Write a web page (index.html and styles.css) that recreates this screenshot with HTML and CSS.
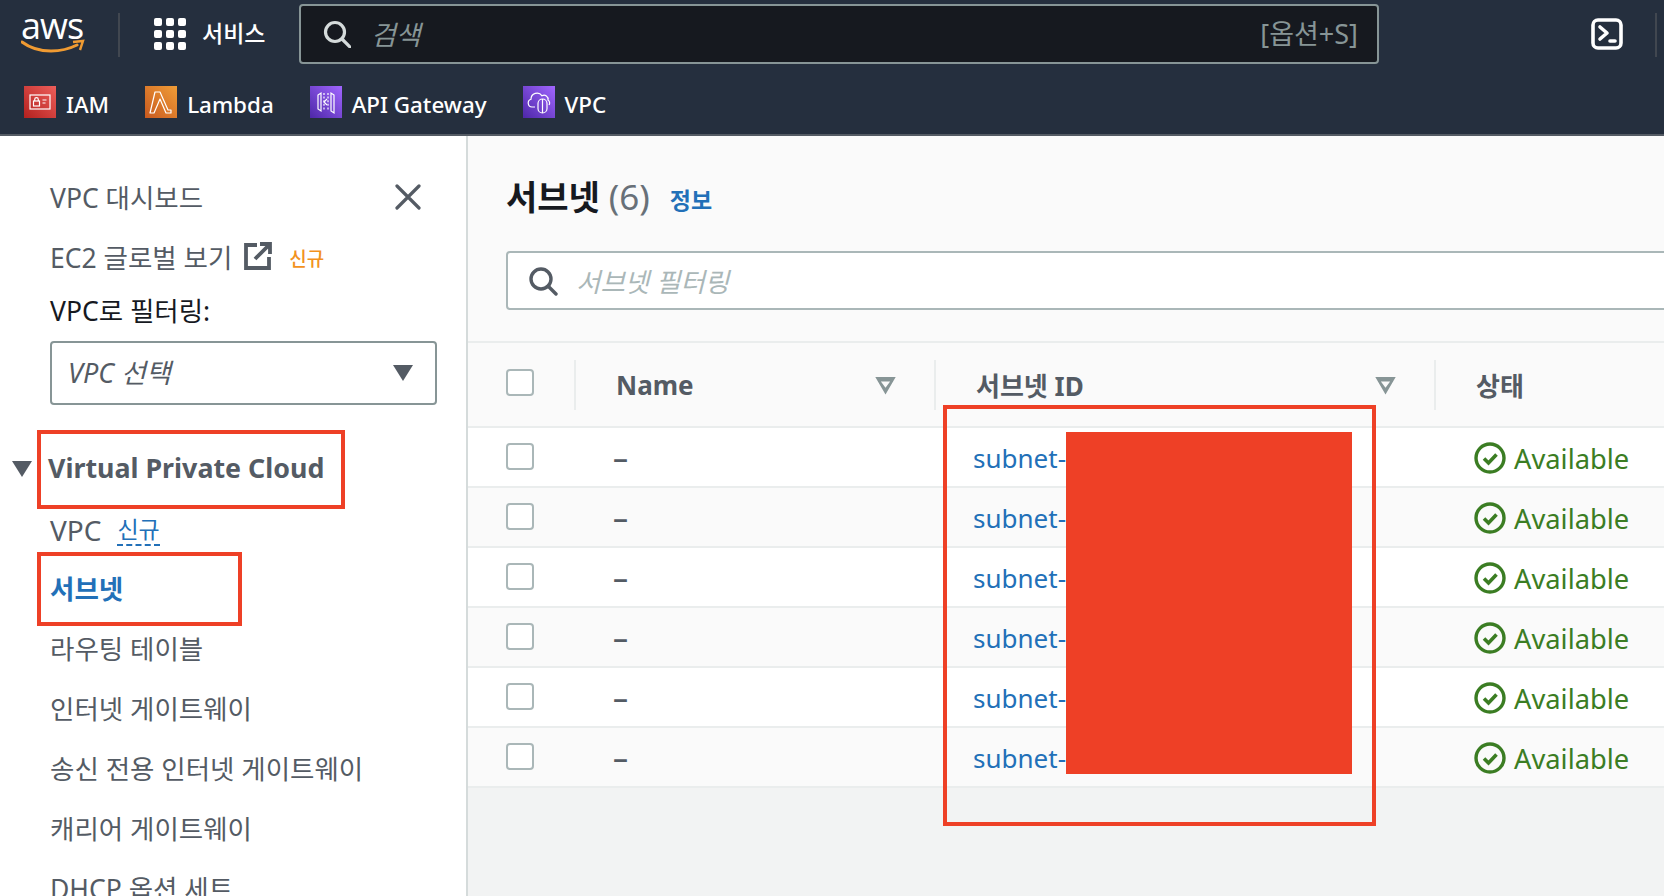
FILE: index.html
```html
<!DOCTYPE html>
<html lang="ko">
<head>
    <meta charset="UTF-8">
    <title>서브넷 | VPC Console</title>
    <link rel="stylesheet" href="styles.css">
</head>
<body>
    <header class="topbar">
        <div class="topbar-main">
            <div class="aws-logo">
                <span class="aws-word">aws</span>
                <svg class="aws-smile" viewBox="0 0 64 16" width="64" height="16"><path d="M1 3c8 6 18 9 29 9 9 0 18-2 26-6" fill="none" stroke="#f09b32" stroke-width="3" stroke-linecap="round"/><path d="M52 3l10-1-3 9" fill="none" stroke="#f09b32" stroke-width="2.4"/></svg>
            </div>
            <div class="services">
                <svg class="grid-icon" viewBox="0 0 34 32" width="34" height="32" fill="#fff">
                    <rect x="0" y="0" width="8" height="8" rx="2"/><rect x="12" y="0" width="8" height="8" rx="2"/><rect x="24" y="0" width="8" height="8" rx="2"/>
                    <rect x="0" y="12" width="8" height="8" rx="2"/><rect x="12" y="12" width="8" height="8" rx="2"/><rect x="24" y="12" width="8" height="8" rx="2"/>
                    <rect x="0" y="24" width="8" height="8" rx="2"/><rect x="12" y="24" width="8" height="8" rx="2"/><rect x="24" y="24" width="8" height="8" rx="2"/>
                </svg>
                <span class="services-text">서비스</span>
            </div>
            <div class="top-search">
                <svg viewBox="0 0 28 28" width="28" height="28" fill="none" stroke="#d5dbdb" stroke-width="3.2"><circle cx="12" cy="12" r="9.5"/><path d="M19 19l8 8" stroke-linecap="round"/></svg>
                <span class="top-search-text">검색</span>
                <span class="top-search-key">[옵션+S]</span>
            </div>
            <svg class="shell-icon" viewBox="0 0 32 32" width="32" height="32" fill="none" stroke="#fff" stroke-width="3.6"><rect x="2" y="2" width="28" height="28" rx="5"/><path d="M9 9l7 6-7 6" stroke-linecap="round" stroke-linejoin="round"/><path d="M19 23h5" stroke-linecap="round"/></svg>
            <div class="shell-divider"></div>
        </div>
        <div class="favorites">
            <div class="fav">
                <svg class="fav-icon" viewBox="0 0 32 32" width="32" height="32"><defs><linearGradient id="g-iam" x1="0" y1="1" x2="1" y2="0"><stop offset="0" stop-color="#b3211f"/><stop offset="1" stop-color="#ed5e5a"/></linearGradient></defs><rect width="32" height="32" fill="url(#g-iam)"/><g fill="none" stroke="#fff" stroke-width="1.2"><rect x="6" y="9" width="20" height="14"/><rect x="9.5" y="15" width="6" height="5"/><path d="M10.7 15v-1.6a1.8 1.8 0 0 1 3.6 0V15M18.5 14h4M18.5 17h3"/></g></svg>
                <span>IAM</span>
            </div>
            <div class="fav">
                <svg class="fav-icon" viewBox="0 0 32 32" width="32" height="32"><defs><linearGradient id="g-lam" x1="0" y1="1" x2="1" y2="0"><stop offset="0" stop-color="#c8591f"/><stop offset="1" stop-color="#f09d37"/></linearGradient></defs><rect width="32" height="32" fill="url(#g-lam)"/><path d="M10 6h5l8 18h3v3h-5l-6-14-6 14H5z" fill="none" stroke="#fff" stroke-width="1.2" stroke-linejoin="round"/></svg>
                <span>Lambda</span>
            </div>
            <div class="fav">
                <svg class="fav-icon" viewBox="0 0 32 32" width="32" height="32"><defs><linearGradient id="g-api" x1="0" y1="1" x2="1" y2="0"><stop offset="0" stop-color="#4d27a8"/><stop offset="1" stop-color="#a166ff"/></linearGradient></defs><rect width="32" height="32" fill="url(#g-api)"/><g fill="none" stroke="#fff" stroke-width="1.2"><path d="M8 9l3-2v18l-3-2zM24 9l-3-2v18l3 2z"/><path d="M14 7v18M18 7v18" stroke-dasharray="2 1.6"/><path d="M17 13l-3 3 3 3"/></g></svg>
                <span>API Gateway</span>
            </div>
            <div class="fav">
                <svg class="fav-icon" viewBox="0 0 32 32" width="32" height="32"><defs><linearGradient id="g-vpc" x1="0" y1="1" x2="1" y2="0"><stop offset="0" stop-color="#4d27a8"/><stop offset="1" stop-color="#a166ff"/></linearGradient></defs><rect width="32" height="32" fill="url(#g-vpc)"/><g fill="none" stroke="#fff" stroke-width="1.2"><path d="M12 21H9a4 4 0 0 1-1-7.8 6 6 0 0 1 11-3.4 4 4 0 0 1 6 4.2 3.5 3.5 0 0 1 1 5"/><rect x="15" y="13" width="9" height="14" rx="4.5"/><path d="M19.5 13v14"/></g></svg>
                <span>VPC</span>
            </div>
        </div>
    </header>

    <div class="layout">
        <nav class="sidebar">
            <div class="side-top">
                <span class="side-link">VPC 대시보드</span>
                <svg class="close-icon" viewBox="0 0 26 26" width="26" height="26" stroke="#545b64" stroke-width="3.2" stroke-linecap="round"><path d="M2 2l22 22M24 2L2 24"/></svg>
            </div>
            <div class="side-row ec2-row">
                <span class="side-link">EC2 글로벌 보기</span>
                <svg viewBox="0 0 28 28" width="28" height="28" fill="none" stroke="#545b64" stroke-width="3.8"><path d="M13 3H2v23h23V15"/><path d="M11 17L25 3M16 2h10v10"/></svg>
                <span class="badge-new">신규</span>
            </div>
            <div class="filter-label">VPC로 필터링:</div>
            <div class="vpc-select">
                <span class="vpc-select-text">VPC 선택</span>
                <span class="tri"></span>
            </div>
            <div class="side-section">
                <span class="tri tri-section"></span>
                <span>Virtual Private Cloud</span>
            </div>
            <ul class="side-list">
                <li class="side-vpc"><span class="side-vpc-name">VPC</span><span class="new-link">신규</span></li>
                <li class="active">서브넷</li>
                <li>라우팅 테이블</li>
                <li>인터넷 게이트웨이</li>
                <li>송신 전용 인터넷 게이트웨이</li>
                <li>캐리어 게이트웨이</li>
                <li>DHCP 옵션 세트</li>
            </ul>
        </nav>

        <main class="content">
            <section class="panel">
                <div class="panel-head">
                    <h1>서브넷 <span class="count">(6)</span></h1>
                    <a class="info">정보</a>
                </div>
                <div class="filter-box">
                    <svg viewBox="0 0 30 30" width="30" height="30" fill="none" stroke="#545b64" stroke-width="3.4"><circle cx="13" cy="13" r="10"/><path d="M20 20l8 8" stroke-linecap="round"/></svg>
                    <span>서브넷 필터링</span>
                </div>
                <div class="table">
                    <div class="row head">
                        <div class="cell"><span class="check"></span></div>
                        <div class="cell th">Name<span class="sort"></span></div>
                        <div class="cell th">서브넷 ID<span class="sort"></span></div>
                        <div class="cell th">상태</div>
                    </div>
                    <div class="row">
                        <div class="cell"><span class="check"></span></div>
                        <div class="cell dash">–</div>
                        <div class="cell"><a class="subnet">subnet-</a></div>
                        <div class="cell status"><svg viewBox="0 0 32 32" width="32" height="32" fill="none" stroke="#3b7d23"><circle cx="16" cy="16" r="14" stroke-width="3.4"/><path d="M10 16.5l4.5 4.5 8-8.5" stroke-width="3.6"/></svg>Available</div>
                    </div>
                    <div class="row">
                        <div class="cell"><span class="check"></span></div>
                        <div class="cell dash">–</div>
                        <div class="cell"><a class="subnet">subnet-</a></div>
                        <div class="cell status"><svg viewBox="0 0 32 32" width="32" height="32" fill="none" stroke="#3b7d23"><circle cx="16" cy="16" r="14" stroke-width="3.4"/><path d="M10 16.5l4.5 4.5 8-8.5" stroke-width="3.6"/></svg>Available</div>
                    </div>
                    <div class="row">
                        <div class="cell"><span class="check"></span></div>
                        <div class="cell dash">–</div>
                        <div class="cell"><a class="subnet">subnet-</a></div>
                        <div class="cell status"><svg viewBox="0 0 32 32" width="32" height="32" fill="none" stroke="#3b7d23"><circle cx="16" cy="16" r="14" stroke-width="3.4"/><path d="M10 16.5l4.5 4.5 8-8.5" stroke-width="3.6"/></svg>Available</div>
                    </div>
                    <div class="row">
                        <div class="cell"><span class="check"></span></div>
                        <div class="cell dash">–</div>
                        <div class="cell"><a class="subnet">subnet-</a></div>
                        <div class="cell status"><svg viewBox="0 0 32 32" width="32" height="32" fill="none" stroke="#3b7d23"><circle cx="16" cy="16" r="14" stroke-width="3.4"/><path d="M10 16.5l4.5 4.5 8-8.5" stroke-width="3.6"/></svg>Available</div>
                    </div>
                    <div class="row">
                        <div class="cell"><span class="check"></span></div>
                        <div class="cell dash">–</div>
                        <div class="cell"><a class="subnet">subnet-</a></div>
                        <div class="cell status"><svg viewBox="0 0 32 32" width="32" height="32" fill="none" stroke="#3b7d23"><circle cx="16" cy="16" r="14" stroke-width="3.4"/><path d="M10 16.5l4.5 4.5 8-8.5" stroke-width="3.6"/></svg>Available</div>
                    </div>
                    <div class="row">
                        <div class="cell"><span class="check"></span></div>
                        <div class="cell dash">–</div>
                        <div class="cell"><a class="subnet">subnet-</a></div>
                        <div class="cell status"><svg viewBox="0 0 32 32" width="32" height="32" fill="none" stroke="#3b7d23"><circle cx="16" cy="16" r="14" stroke-width="3.4"/><path d="M10 16.5l4.5 4.5 8-8.5" stroke-width="3.6"/></svg>Available</div>
                    </div>
                </div>
            </section>
        </main>
    </div>

    <!-- annotations drawn over the screenshot -->
    <div class="mark mark-section"></div>
    <div class="mark mark-subnet"></div>
    <div class="mark mark-ids"></div>
    <div class="redact"></div>
</body>
</html>
```

FILE: styles.css
```css
* {
    box-sizing: border-box;
}
html, body {
    height: 100%;
}
body {
    margin: 0;
    height: 896px;
    overflow: hidden;
    position: relative;
    display: flex;
    flex-direction: column;
    font-family: "Noto Sans", "Noto Sans CJK KR", sans-serif;
    font-size: 26.5px;
    color: #545b64;
    background-color: #f2f3f3;
}

/* top bar */
.topbar {
    height: 136px;
    flex: none;
    background-color: #252f3e;
    border-bottom: 2px solid #545b64;
    color: #fff;
}
.topbar-main {
    height: 68px;
    display: flex;
    align-items: flex-start;
    padding-top: 4px;
}
.aws-logo {
    width: 120px;
    height: 44px;
    margin-top: 9px;
    padding-left: 21px;
    border-right: 2px solid #414750;
}
.aws-word {
    display: block;
    font-family: "Open Sans", sans-serif;
    font-size: 36px;
    line-height: 25px;
    letter-spacing: -1px;
}
.aws-smile {
    display: block;
    margin-top: 1px;
}
.services {
    width: 179px;
    height: 60px;
    display: flex;
    align-items: center;
    gap: 14px;
    padding-left: 34px;
    font-size: 23px;
    font-weight: 500;
}
.services-text {
    margin-top: -4px;
}
.top-search {
    width: 1080px;
    height: 60px;
    display: flex;
    align-items: center;
    padding: 0 19px 0 22px;
    background-color: #16191f;
    border: 2px solid #879596;
    border-radius: 4px;
    font-size: 27px;
    color: #879596;
}
.top-search-text {
    margin-top: -2px;
    margin-left: 20px;
    font-style: italic;
}
.top-search-key {
    margin-top: -3px;
    margin-left: auto;
}
.shell-icon {
    margin: 14px 0 0 212px;
}
.shell-divider {
    width: 2px;
    height: 44px;
    margin: 9px 0 0 32px;
    background-color: #414750;
}
.favorites {
    height: 66px;
    display: flex;
    align-items: center;
    padding-left: 24px;
    padding-top: 4px;
}
.fav {
    display: flex;
    align-items: center;
    gap: 10px;
    margin-right: 36px;
    font-size: 22.4px;
    font-weight: 500;
}
.fav span {
    margin-top: 2px;
}
.fav-icon {
    margin-top: -2px;
}

/* body */
.layout {
    flex: 1;
    display: flex;
    min-height: 0;
}
.sidebar {
    width: 468px;
    flex: none;
    background-color: #fff;
    border-right: 2px solid #d5dbdb;
    padding: 43px 0 0 50px;
    overflow: hidden;
}
.side-top {
    display: flex;
    align-items: center;
    justify-content: space-between;
    height: 34px;
    padding-right: 45px;
}
.close-icon {
    margin-top: 2px;
}
.side-row {
    display: flex;
    align-items: center;
}
.ec2-row {
    height: 34px;
    margin-top: 26px;
    gap: 12px;
}
.badge-new {
    margin-left: 5px;
    margin-top: 4px;
    font-size: 19px;
    font-weight: 500;
    color: #f2921d;
}
.filter-label {
    margin-top: 21px;
    height: 34px;
    line-height: 34px;
    color: #16191f;
}
.vpc-select {
    width: 387px;
    height: 64px;
    margin-top: 13px;
    display: flex;
    align-items: center;
    justify-content: space-between;
    padding: 0 22px 0 16px;
    border: 2px solid #879596;
    border-radius: 4px;
    font-size: 27px;
    font-style: italic;
}
.vpc-select-text {
    margin-top: -4px;
}
.tri {
    width: 0;
    height: 0;
    border-left: 10px solid transparent;
    border-right: 10px solid transparent;
    border-top: 16px solid #545b64;
}
.side-section {
    position: relative;
    height: 34px;
    margin-top: 45px;
    display: flex;
    align-items: center;
    font-size: 26.8px;
    font-weight: 700;
    margin-left: -2px;
}
.tri-section {
    position: absolute;
    left: -36px;
    top: 11px;
}
.side-list {
    list-style: none;
    margin: 13px 0 0;
    padding: 0;
}
.side-list li {
    height: 60px;
    display: flex;
    align-items: center;
    gap: 16px;
    white-space: nowrap;
}
.side-list .side-vpc {
    padding-top: 5px;
}
.side-vpc-name {
    font-size: 28px;
}
.side-list .active {
    color: #2270b8;
    font-weight: 700;
}
.new-link {
    font-size: 23px;
    color: #2270b8;
    border-bottom: 2px dashed #2270b8;
    line-height: 30px;
}

/* main panel */
.content {
    flex: 1;
    min-width: 0;
    overflow: hidden;
}
.panel {
    background-color: #fafafa;
}
.panel-head {
    height: 115px;
    display: flex;
    align-items: center;
    padding: 3px 0 0 38px;
    gap: 20px;
}
.panel-head h1 {
    margin: 0;
    font-size: 34px;
    font-weight: 700;
    color: #16191f;
}
.count {
    font-size: 35px;
    font-weight: 400;
    color: #687078;
}
.info {
    margin-top: 8px;
    font-size: 23px;
    font-weight: 700;
    color: #2270b8;
}
.filter-box {
    height: 59px;
    margin: 0 -10px 0 38px;
    display: flex;
    align-items: center;
    gap: 18px;
    padding-left: 20px;
    background-color: #fff;
    border: 2px solid #aab7b8;
    border-radius: 4px;
    font-style: italic;
    color: #aab7b8;
}
.table {
    margin-top: 31px;
    border-top: 2px solid #eaeded;
}
.row {
    height: 60px;
    display: grid;
    grid-template-columns: 106px 360px 500px 1fr;
    align-items: center;
    background-color: #fff;
    border-bottom: 2px solid #eaeded;
}
.row:nth-child(odd) {
    background-color: #fafafa;
}
.row.head {
    height: 85px;
    background-color: #fafafa;
}
.row .check {
    margin-top: -2px;
}
.row.head .check {
    margin-top: -5px;
}
.cell {
    position: relative;
    display: flex;
    align-items: center;
    padding-left: 39px;
    white-space: nowrap;
}
.row .cell:first-child {
    padding-left: 38px;
}
.check {
    width: 28px;
    height: 27px;
    background-color: #fff;
    border: 2px solid #aab7b8;
    border-radius: 4px;
}
.th {
    height: 50px;
    padding-left: 40px;
    font-size: 26px;
    font-weight: 700;
    border-left: 2px solid #eaeded;
}
.sort {
    position: absolute;
    right: 38px;
    top: 17px;
    width: 21px;
    height: 18px;
    background-color: #879596;
    clip-path: polygon(0 0, 100% 0, 50% 100%, 0 0, 28% 28%, 50% 62%, 72% 28%, 28% 28%);
}
.dash {
    font-size: 30px;
    font-weight: 500;
    padding-left: 39px;
}
.subnet {
    margin-top: 2px;
    font-size: 26px;
    color: #2270b8;
}
.status {
    padding: 2px 0 0 40px;
    gap: 8px;
    font-size: 27.3px;
    color: #3b7d23;
}

/* red annotations */
.mark {
    position: absolute;
    border: 4px solid #ee4026;
}
.mark-section {
    left: 37px;
    top: 430px;
    width: 308px;
    height: 79px;
}
.mark-subnet {
    left: 37px;
    top: 552px;
    width: 205px;
    height: 74px;
}
.mark-ids {
    left: 943px;
    top: 405px;
    width: 433px;
    height: 421px;
}
.redact {
    position: absolute;
    left: 1066px;
    top: 432px;
    width: 286px;
    height: 342px;
    background-color: #ee4026;
}
```
